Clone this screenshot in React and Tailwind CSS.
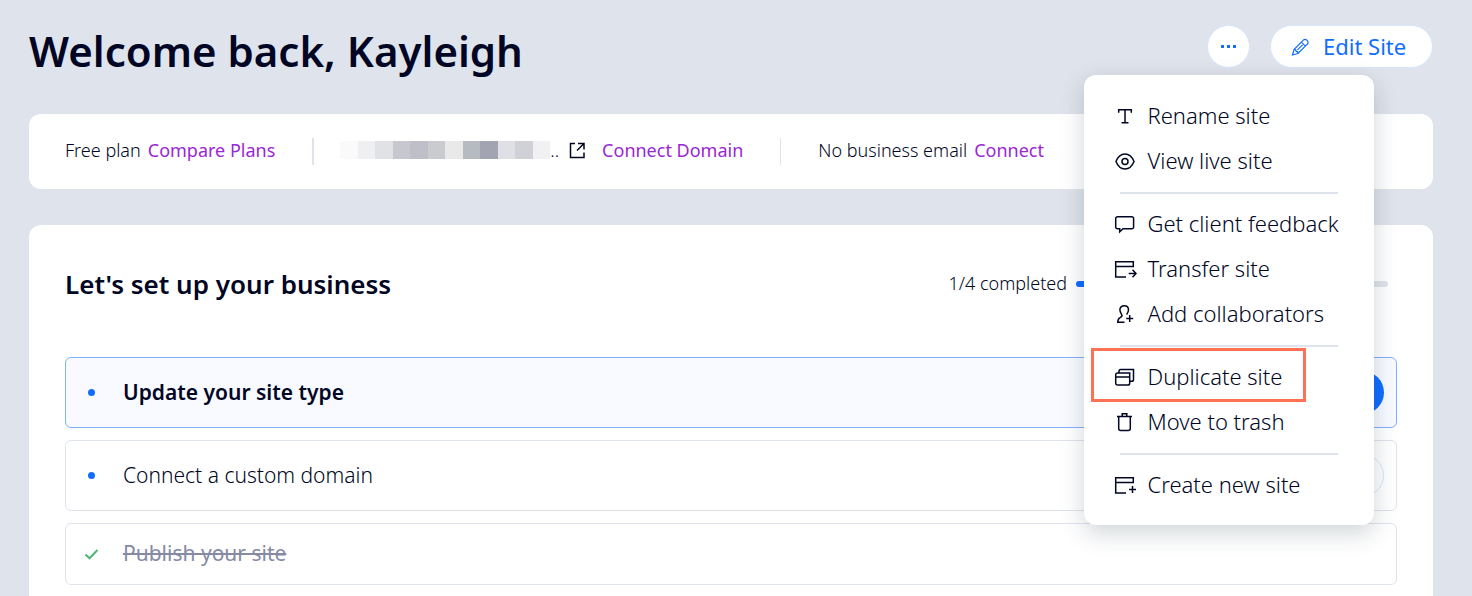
const iconProps = {
  width: 24,
  height: 24,
  viewBox: '0 0 24 24',
  fill: 'none',
  stroke: 'currentColor',
  strokeWidth: 1.5,
  'aria-hidden': true,
};

const icons = {
  rename: (
    <svg {...iconProps}>
      <path d="M5.700 8.700V5.700h12.600v3M12 5.700v13M8.500 18.700h7" />
    </svg>
  ),
  view: (
    <svg {...iconProps}>
      <path d="M3 12.500C4.600 8.500 7.200 5 12 5s7.400 3.500 9 7.500C19.400 16.500 16.800 20 12 20S4.600 16.500 3 12.500Z" />
      <circle cx="12" cy="12.500" r="3" />
    </svg>
  ),
  feedback: (
    <svg {...iconProps}>
      <path d="M4.500 4.700h14.300a1.800 1.800 0 0 1 1.800 1.800v8.400a1.800 1.800 0 0 1-1.800 1.800H10l-3.300 3v-3H4.500a1.800 1.800 0 0 1-1.800-1.800V6.500a1.800 1.800 0 0 1 1.800-1.800Z" />
    </svg>
  ),
  transfer: (
    <svg {...iconProps}>
      <path d="M13 20H2.700V4.700h17.600v4.800H2.700M15.700 16.500h7M19.500 12.800l3.500 3.700-3.500 3.700" />
    </svg>
  ),
  collaborators: (
    <svg {...iconProps}>
      <path d="M11.500 20.300H4.800c0-3 .8-4 2.300-4.700 1.200-.6 2-1 2-2 0-1.200-2.200-2.600-2.200-5.800 0-2.400 1.800-4.100 4.300-4.100s4.300 1.700 4.300 4.100c0 2-.8 3.400-1.900 4.700M16.700 13v7M13.200 16.500h7" />
    </svg>
  ),
  duplicate: (
    <svg {...iconProps}>
      <path d="M4.500 8h12.200v10.200a1.800 1.800 0 0 1-1.800 1.800H4.500a1.800 1.800 0 0 1-1.800-1.800V9.800A1.800 1.800 0 0 1 4.500 8ZM2.700 12h14M6 8V6.300a1.800 1.800 0 0 1 1.800-1.800h12.700v9.900a1.800 1.800 0 0 1-1.800 1.800h-2" />
    </svg>
  ),
  trash: (
    <svg {...iconProps}>
      <path d="M4 6.500h15M5.700 6.500v12a2 2 0 0 0 2 2h7.600a2 2 0 0 0 2-2v-12M9.200 6.500V3.700h4.600v2.800" />
    </svg>
  ),
  create: (
    <svg {...iconProps}>
      <path d="M13 20H2.700V4.700h17.600v4.800H2.700M19.500 13v7M16 16.500h7" />
    </svg>
  ),
};

const menuGroups = [
  [
    { icon: 'rename', label: 'Rename site' },
    { icon: 'view', label: 'View live site' },
  ],
  [
    { icon: 'feedback', label: 'Get client feedback' },
    { icon: 'transfer', label: 'Transfer site' },
    { icon: 'collaborators', label: 'Add collaborators' },
  ],
  [
    { icon: 'duplicate', label: 'Duplicate site', highlighted: true },
    { icon: 'trash', label: 'Move to trash' },
  ],
  [{ icon: 'create', label: 'Create new site' }],
];

// Blocks that hide the site's address
const maskColors = [
  '#fafafa', '#efeff1', '#e1e2e6', '#c7c7d0', '#bfbfc9', '#cacbcf',
  '#e9e9ea', '#b6bac1', '#a2a5b1', '#dfe0e5', '#d0d1d6', '#f1f1f3',
];

const SiteMenu = () => (
  <div className="absolute top-full left-1/2 z-10 mt-[7px] w-[290px] -translate-x-1/2 rounded-xl bg-white py-[18px] shadow-[0_8px_24px_rgba(22,45,61,0.2)]">
    {menuGroups.map((group, i) => (
      <div key={group[0].label}>
        {i > 0 && <hr className="mx-9 mt-[9px] mb-[7px] border-t-2 border-[#dfe3eb]" />}
        {group.map(({ icon, label, highlighted }) => (
          <button key={label} className="relative flex h-[45px] w-full items-center gap-[11px] pl-[29px] text-left text-[22px] font-light whitespace-nowrap">
            {icons[icon]}
            {label}
            {highlighted && (
              <span className="absolute -top-1.5 -bottom-[3px] left-[7px] w-[215px] border-3 border-[#ff7154]" />
            )}
          </button>
        ))}
      </div>
    ))}
  </div>
);

const Header = () => (
  <header className="flex h-[43px] items-center justify-between">
    <h1 className="pt-2 text-[42px] leading-[52px] font-semibold">Welcome back, Kayleigh</h1>
    <div className="flex gap-5 text-[#116dff]">
      <div className="relative">
        <button aria-label="More actions" className="flex size-[43px] items-center justify-center gap-[3px] rounded-full border border-[#d6e6fe] bg-white">
          <span className="size-[3px] bg-[#116dff]" />
          <span className="size-[3px] bg-[#116dff]" />
          <span className="size-[3px] bg-[#116dff]" />
        </button>
        <div className="text-[#000624]">
          <SiteMenu />
        </div>
      </div>
      <button className="flex h-[43px] w-[163px] items-center gap-3 rounded-full border border-[#d6e6fe] bg-white pl-[18px] text-[22px]">
        <svg width="22" height="22" viewBox="0 0 22 22" fill="none" stroke="currentColor" strokeWidth="1.2" aria-hidden="true">
          <path d="M3.500 19 5 13.500 14.300 4.200a2.400 2.400 0 0 1 3.500 0l.5.5a2.400 2.400 0 0 1 0 3.500L9 17.500 3.500 19ZM5 13.500l1.700.3.500 1.600 1.500.4.300 1.700M12.300 6.200l4 4M8.500 13.800l5-5" />
        </svg>
        Edit Site
      </button>
    </div>
  </header>
);

const PlanBar = () => (
  <section className="mt-[46px] flex h-[75px] items-center rounded-xl bg-white px-9 text-lg font-light whitespace-nowrap">
    <p className="flex gap-[7px] pb-[3px]">
      Free plan
      <a href="#plans" className="font-normal text-[#9a27d5]">Compare Plans</a>
    </p>
    <div className="mr-[26px] ml-[37px] h-[27px] w-0.5 bg-[#dfe3eb]" />
    <div className="flex items-center pb-[3px]">
      <div className="flex h-[18px] w-[210px]">
        {maskColors.map((color) => (
          <span key={color} className="flex-1" style={{ backgroundColor: color }} />
        ))}
      </div>
      <span>..</span>
      <svg className="mx-2" width="20" height="20" viewBox="0 0 20 20" fill="none" stroke="currentColor" strokeWidth="1.5" aria-hidden="true">
        <path d="M8 3.500H3.500V17.500H17V12.500M11 3.500h6V9.500M17 3.500l-7 7" />
      </svg>
      <a href="#domain" className="ml-[7px] font-normal text-[#9a27d5]">Connect Domain</a>
    </div>
    <div className="mx-[37px] h-[27px] w-px bg-[#dfe3eb]" />
    <p className="flex gap-[7px] pb-[3px]">
      No business email
      <a href="#email" className="font-normal text-[#9a27d5]">Connect</a>
    </p>
  </section>
);

const Dot = () => <span className="mx-[22px] size-[7px] rounded-full bg-[#116dff]" />;

const SetupCard = () => (
  <section className="mt-9 flex-1 rounded-t-xl bg-white px-9 pt-[39px] pb-[11px]">
    <div className="flex h-10 items-center justify-between">
      <h2 className="text-[26px] font-semibold">Let&apos;s set up your business</h2>
      <div className="mr-[9px] flex items-center gap-[9px]">
        <span id="progress-label" className="pb-0.5 text-lg font-light">1/4 completed</span>
        <div role="progressbar" aria-labelledby="progress-label" aria-valuenow={1} aria-valuemin={0} aria-valuemax={4} className="h-1.5 w-[312px] rounded-full bg-[#dfe3eb]">
          <div className="h-full w-1/4 rounded-full bg-[#116dff]" />
        </div>
      </div>
    </div>

    <ul className="mt-[53px] space-y-3 text-[21px]">
      <li className="flex h-[71px] items-center rounded-md border border-[#80b1ff] bg-[#f8faff] pr-3">
        <Dot />
        <span className="ml-1.5 flex-1 font-semibold">Update your site type</span>
        <button aria-label="Update site type" className="h-[43px] w-28 rounded-full bg-[#116dff]" />
      </li>
      <li className="flex h-[71px] items-center rounded-md border border-[#dfe3eb] pr-3">
        <Dot />
        <span className="ml-1.5 flex-1 font-light">Connect a custom domain</span>
        <button aria-label="Connect domain" className="h-[43px] w-28 rounded-full border border-[#d6e6fe]" />
      </li>
      <li className="flex h-[62px] items-center rounded-md border border-[#dfe3eb]">
        <svg className="mx-[18px]" width="15" height="14" viewBox="0 0 15 14" fill="none" stroke="#4eb772" strokeWidth="2" role="img" aria-label="Done">
          <path d="m1.500 7.500 4 3.800 8-8.300" />
        </svg>
        <s className="ml-1.5 text-[#868aa5]">Publish your site</s>
      </li>
    </ul>
  </section>
);

const App = () => (
  <main className="flex min-h-screen flex-col bg-[#dfe3eb] pt-[25px] pr-[39px] pl-[29px] font-['Noto_Sans',sans-serif] text-[#000624]">
    <Header />
    <PlanBar />
    <SetupCard />
  </main>
);

export default App;
